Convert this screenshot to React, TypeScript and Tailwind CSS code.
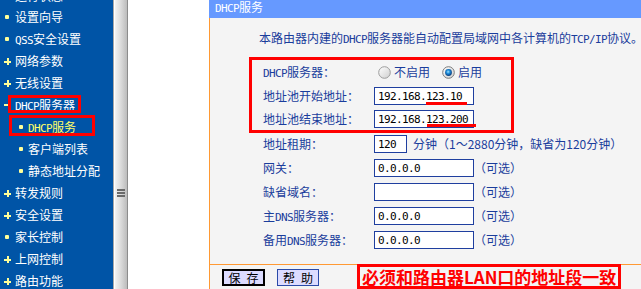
import React from 'react';

type Bullet = 'dot' | 'plus' | 'minus';

// ascii runs: 6px per char like the old bitmap font
const L = ({ children }: { children: React.ReactNode }) => (
  <span className="font-['DejaVu_Sans_Mono',monospace] text-[11px] tracking-[-0.62px]">{children}</span>
);

const BulletIcon = ({ kind }: { kind: Bullet }) => {
  if (kind === 'plus')
    return (
      <svg width="7" height="7" viewBox="0 0 7 7" shapeRendering="crispEdges">
        <rect x="0" y="2.5" width="7" height="2" fill="#ffff99" />
        <rect x="2.5" y="0" width="2" height="7" fill="#ffff99" />
      </svg>
    );
  if (kind === 'minus')
    return (
      <svg width="5" height="2" viewBox="0 0 5 2">
        <rect width="5" height="2" fill="#ffff99" />
      </svg>
    );
  return <span className="ml-px block h-[4px] w-[4px] rounded-[1px] bg-[#ffff99]" />;
};

const menu: { label: React.ReactNode; kind: Bullet; sub?: boolean; active?: boolean }[] = [
  { label: <>设置向导</>, kind: 'dot' },
  { label: <><L>QSS</L>安全设置</>, kind: 'dot' },
  { label: <>网络参数</>, kind: 'plus' },
  { label: <>无线设置</>, kind: 'plus' },
  { label: <><L>DHCP</L>服务器</>, kind: 'minus' },
  { label: <><L>DHCP</L>服务</>, kind: 'dot', sub: true, active: true },
  { label: <>客户端列表</>, kind: 'dot', sub: true },
  { label: <>静态地址分配</>, kind: 'dot', sub: true },
  { label: <>转发规则</>, kind: 'plus' },
  { label: <>安全设置</>, kind: 'plus' },
  { label: <>家长控制</>, kind: 'dot' },
  { label: <>上网控制</>, kind: 'plus' },
  { label: <>路由功能</>, kind: 'plus' },
];

const Radio = ({ checked }: { checked?: boolean }) => (
  <svg width="13" height="13" viewBox="0 0 13 13">
    <defs>
      <linearGradient id="rface" x1="0" y1="0" x2="1" y2="1">
        <stop offset="0" stopColor="#ffffff" />
        <stop offset="1" stopColor="#cfcfcf" />
      </linearGradient>
      <radialGradient id="rdot" cx="45%" cy="40%" r="60%">
        <stop offset="0" stopColor="#9fe4ff" />
        <stop offset="0.45" stopColor="#1c8ad8" />
        <stop offset="1" stopColor="#0a3a78" />
      </radialGradient>
    </defs>
    <circle cx="6.5" cy="6.5" r="5.8" fill="url(#rface)" stroke={checked ? '#7a7a7a' : '#9c9c9c'} strokeWidth="1" />
    {checked && <circle cx="6.5" cy="6.5" r="3.4" fill="url(#rdot)" />}
  </svg>
);

const Field = ({ value, w = 'w-[100px]', children }: { value: string; w?: string; children?: React.ReactNode }) => (
  <div className={`relative flex h-[18px] shrink-0 items-center border border-[#1f3f9f] bg-white pl-[3px] text-black ${w}`}>
    <L>{value}</L>
    {children}
  </div>
);

const lowerRows: { label: React.ReactNode; value: string; short?: boolean; note: string }[] = [
  { label: <>地址租期：</>, value: '120', short: true, note: '分钟（1～2880分钟，缺省为120分钟）' },
  { label: <>网关：</>, value: '0.0.0.0', note: '（可选）' },
  { label: <>缺省域名：</>, value: '', note: '（可选）' },
  { label: <>主<L>DNS</L>服务器：</>, value: '0.0.0.0', note: '（可选）' },
  { label: <>备用<L>DNS</L>服务器：</>, value: '0.0.0.0', note: '（可选）' },
];

export default function App() {
  return (
    <div className="flex h-[289px] w-[641px] overflow-hidden bg-white font-['Noto_Sans_CJK_SC',sans-serif] text-[12px]">
      {/* left menu */}
      <div className="relative w-[113px] shrink-0 bg-[#0054a6]">
        <div className="-mt-[14px]">
          {/* item scrolled above the top edge */}
          <div className="flex h-[20px] items-center leading-none">
            <div className="flex w-[15px] items-center pl-[4px]">
              <BulletIcon kind="dot" />
            </div>
            <span className="text-white">运行状态</span>
          </div>
          {menu.map((m, i) => (
            <div key={i} className="flex h-[22px] items-center leading-none">
              <div className={m.sub ? 'flex w-[28px] items-center pl-[18px]' : 'flex w-[15px] items-center pl-[4px]'}>
                <BulletIcon kind={m.kind} />
              </div>
              <span className={`whitespace-nowrap ${m.active ? 'text-[#ffff66]' : 'text-white'}`}>{m.label}</span>
            </div>
          ))}
        </div>
        <div className="absolute left-[8px] top-[95px] h-[18px] w-[73px] border-[3px] border-[#ff0000]" />
        <div className="absolute left-[9px] top-[115px] h-[21px] w-[86px] border-[3px] border-[#ff0000]" />
      </div>

      {/* frame splitter */}
      <div className="flex w-[15px] shrink-0">
        <div className="w-px bg-[#a8a8a8]" />
        <div className="w-px bg-white" />
        <div className="flex w-[12px] flex-col items-center gap-[1px] bg-linear-to-r from-[#f3f3f3] via-[#dadada] to-[#bcbcbc] pt-[189px]">
          <div className="h-[2px] w-[8px] bg-[#6a6a6a]" />
          <div className="h-[2px] w-[8px] bg-[#6a6a6a]" />
          <div className="h-[2px] w-[8px] bg-[#6a6a6a]" />
        </div>
        <div className="w-px bg-[#8c8c8c]" />
      </div>

      <div className="w-[81px] shrink-0 bg-white" />

      {/* main panel */}
      <div className="flex w-[432px] shrink-0 flex-col">
        <div className="flex h-[20px] items-center bg-[#6699ff] pb-[3px] pl-[6px] leading-none text-white">
          <span><L>DHCP</L>服务</span>
        </div>

        <div className="flex flex-1 flex-col border-l border-[#ff9933] bg-[#f4f4f4] text-[#1a3d9c]">
          <p className="whitespace-nowrap pl-[49px] pt-[13px] leading-[14px]">
            本路由器内建的<L>DHCP</L>服务器能自动配置局域网中各计算机的<L>TCP/IP</L>协议。
          </p>

          <div className="ml-[39px] mt-[10px] w-[265px] border-[3px] border-[#ff0000] pl-[11px] leading-none">
            <div className="flex h-[24px] items-center">
              <span className="w-[111px] shrink-0"><L>DHCP</L>服务器：</span>
              <div className="flex items-center pl-[4px]">
                <Radio />
                <span className="ml-[3px]">不启用</span>
                <span className="ml-[12px]"><Radio checked /></span>
                <span className="ml-[3px]">启用</span>
              </div>
            </div>
            <div className="flex h-[24px] items-center">
              <span className="w-[111px] shrink-0">地址池开始地址：</span>
              <Field value="192.168.123.10">
                <span className="absolute left-[51px] top-[14px] h-[3px] w-[41px] bg-[#ff0000]" />
              </Field>
            </div>
            <div className="flex h-[22px] items-center">
              <span className="w-[111px] shrink-0">地址池结束地址：</span>
              <Field value="192.168.123.200">
                <span className="absolute left-[52px] top-[13px] h-[3px] w-[49px] bg-[#ff0000]" />
              </Field>
            </div>
          </div>

          <div className="-mt-px pl-[53px] leading-none">
            {lowerRows.map((r, i) => (
              <div key={i} className="flex h-[24px] items-center whitespace-nowrap">
                <span className="w-[111px] shrink-0">{r.label}</span>
                <Field value={r.value} w={r.short ? 'w-[33px]' : 'w-[100px]'} />
                <span className={r.short ? 'ml-[6px]' : 'ml-0'}>{r.note}</span>
              </div>
            ))}
          </div>

          <div className="mt-[12px] flex flex-1 items-start border-t border-[#ff9933] pl-[12px] leading-none">
            <button className="mt-[4px] flex h-[17px] w-[43px] items-center justify-center gap-[6px] border-2 border-black bg-[#dcdcff] text-black">
              <span>保</span>
              <span>存</span>
            </button>
            <button className="ml-[12px] mt-[4px] flex h-[17px] w-[42px] items-center justify-center gap-[6px] border border-[#2a4aa8] bg-[#dcdcff] text-black">
              <span>帮</span>
              <span>助</span>
            </button>
            <div className="-mt-px ml-[38px] flex h-[25px] w-[264px] items-center whitespace-nowrap border-[3px] border-[#ff0000] pl-[2px] text-[17px] font-bold text-[#ff0000]">
              必须和路由器LAN口的地址段一致
            </div>
          </div>
        </div>
      </div>
    </div>
  );
}
